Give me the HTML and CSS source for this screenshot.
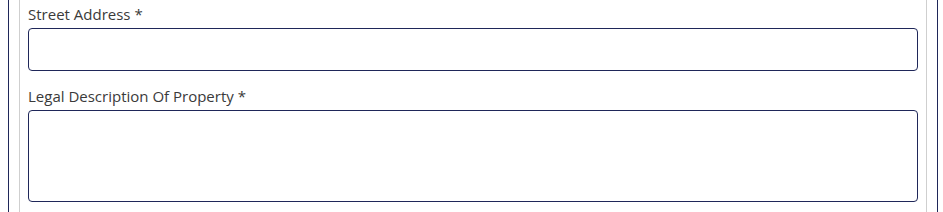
FILE: index.html
```html
<!DOCTYPE html>
<html lang="en">
<head>
  <meta charset="UTF-8" />
  <title>Property Details</title>
  <link rel="stylesheet" href="styles.css">
</head>
<body>
  <div class="panel">
    <div class="section">
      <div class="field">
        <label class="field-label" for="street">Street Address *</label>
        <input class="field-input" type="text" id="street" />
      </div>
      <div class="field">
        <label class="field-label" for="legal">Legal Description Of Property *</label>
        <textarea class="field-input field-area" id="legal"></textarea>
      </div>
    </div>
  </div>
</body>
</html>
```

FILE: styles.css
```css
* {
  margin: 0;
  padding: 0;
  box-sizing: border-box;
}

html, body {
  height: 100%;
}

body {
  font-family: "Open Sans", "Noto Sans", sans-serif;
  font-size: 15px;
  color: #3a3a3a;
  background: #ffffff;
  padding: 0 5px 0 8px;
  overflow: hidden;
}

.panel {
  height: 100%;
  border-left: 1px solid #1f2759;
  border-right: 1px solid #1f2759;
  padding: 0 10px;
}

.section {
  height: 100%;
  border-left: 1px solid #cfcfcf;
  border-right: 1px solid #cfcfcf;
  padding: 4px 8px 0;
}

.field {
  margin-bottom: 15px;
}

.field-label {
  display: block;
  line-height: 20px;
  margin-bottom: 4px;
}

.field-input {
  display: block;
  width: 100%;
  height: 43px;
  border: 1px solid #1f2759;
  border-radius: 4px;
  background: #ffffff;
  font-family: inherit;
  font-size: 14px;
  padding: 6px 10px;
  outline: none;
}

.field-area {
  height: 92px;
  resize: none;
}
```
